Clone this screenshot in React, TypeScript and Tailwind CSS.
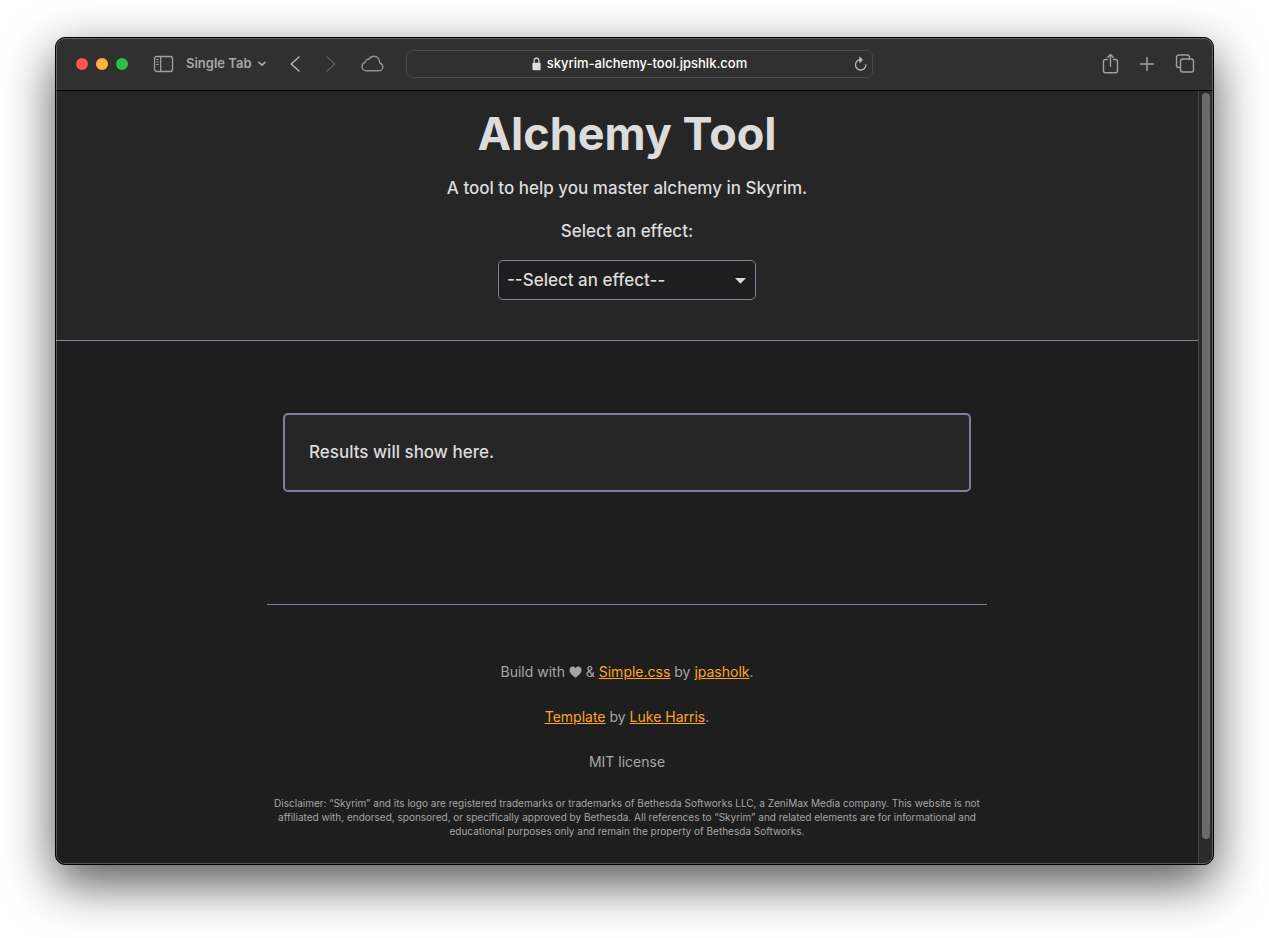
import React from "react";

function Toolbar() {
  return (
    <header className="flex h-[52px] items-center bg-[#303030] pr-[17px] pl-5 text-[#a8a8a8]">
      <div className="flex items-center gap-2">
        <span className="size-3 rounded-full bg-[#fe5550]" />
        <span className="size-3 rounded-full bg-[#ffb339]" />
        <span className="size-3 rounded-full bg-[#2dc143]" />
      </div>
      <button type="button" aria-label="Sidebar" className="ml-[25px]">
        <svg width="21" height="18" viewBox="0 0 21 18" fill="none" stroke="#a0a0a0" strokeWidth="1.3">
          <rect x="1.5" y="1.5" width="18" height="15" rx="2" />
          <path d="M7.700 1.500v15" />
          <path d="M3.200 4.500h2.400M3.200 7h2.400M3.200 9.500h2.400" strokeWidth="1" />
        </svg>
      </button>
      <button type="button" className="ml-3 flex items-center gap-[6px] text-[13px] font-semibold">
        Single Tab
        <svg width="8" height="6" viewBox="0 0 8 6" fill="none" stroke="currentColor" strokeWidth="1.7" strokeLinecap="round" strokeLinejoin="round">
          <path d="M1 1.3 4 4.2 7 1.3" />
        </svg>
      </button>
      <button type="button" aria-label="Back" className="ml-6">
        <svg width="10" height="16" viewBox="0 0 10 16" fill="none" stroke="#b4b4b4" strokeWidth="1.5" strokeLinecap="round" strokeLinejoin="round">
          <path d="M9 1 1.200 8 9 15" />
        </svg>
      </button>
      <button type="button" aria-label="Forward" className="ml-[26px]" disabled>
        <svg width="10" height="16" viewBox="0 0 10 16" fill="none" stroke="#5c5c5c" strokeWidth="1.5" strokeLinecap="round" strokeLinejoin="round">
          <path d="M1 1 8.800 8 1 15" />
        </svg>
      </button>
      <button type="button" aria-label="iCloud tabs" className="ml-[25px]">
        <svg width="23" height="18" viewBox="0 0 23 18" fill="none" stroke="#909090" strokeWidth="1.4" strokeLinejoin="round">
          <path d="M5.200 15.800h12.400c2.400 0 4.200-1.700 4.200-3.900 0-2-1.300-3.400-3-3.900C18.800 4 16.300 1.200 13 1.200c-2.400 0-4.200 1.200-5.200 3.100C5.900 3.900 4.200 5.300 4.200 7.400 2.300 8 1 9.500 1 11.600c0 2.400 1.800 4.200 4.200 4.200Z" />
        </svg>
      </button>
      <div className="ml-[22px] flex h-7 w-[467px] min-w-0 items-center rounded-[7px] border border-[#494949] px-1">
        <div className="flex flex-1 items-center justify-center gap-[6px] pl-4 text-[13px] font-medium text-white">
          <svg width="9" height="14" viewBox="0 0 9 14" aria-hidden="true">
            <rect x="0.400" y="5.800" width="8.200" height="7.400" rx="1.200" fill="#dedede" />
            <path d="M2.100 6.500V4c0-1.800.9-2.900 2.400-2.900S6.900 2.200 6.900 4v2.500" fill="none" stroke="#dedede" strokeWidth="1.200" />
          </svg>
          skyrim-alchemy-tool.jpshlk.com
        </div>
        <button type="button" aria-label="Reload">
          <svg width="15" height="16" viewBox="0 0 15 16" fill="none" stroke="#b8b8b8" strokeWidth="1.300" strokeLinecap="round">
            <path d="M7.800 3.600a5.200 5.200 0 1 0 5.100 5.200" />
            <path d="M6.800 1.200 9.600 3.800 7 6.500Z" fill="#b8b8b8" strokeWidth="0.800" strokeLinejoin="round" />
          </svg>
        </button>
      </div>
      <div className="ml-auto flex items-center gap-[19px] text-[#a0a0a0]">
        <button type="button" aria-label="Share">
          <svg width="18" height="22" viewBox="0 0 18 22" fill="none" stroke="currentColor" strokeWidth="1.400" strokeLinecap="round" strokeLinejoin="round">
            <path d="M5.500 6.500H3.500a2 2 0 0 0-2 2v9.300a2 2 0 0 0 2 2h10a2 2 0 0 0 2-2V8.500a2 2 0 0 0-2-2H11.500M8.500 13.200V1.500M5.800 4.200 8.500 1.500l2.700 2.700" />
          </svg>
        </button>
        <button type="button" aria-label="New tab">
          <svg width="16" height="16" viewBox="0 0 16 16" fill="none" stroke="currentColor" strokeWidth="1.500" strokeLinecap="round">
            <path d="M8 1.500v13M1.500 8h13" />
          </svg>
        </button>
        <button type="button" aria-label="Tab overview">
          <svg width="22" height="22" viewBox="0 0 22 22" fill="none" stroke="currentColor" strokeWidth="1.400">
            <rect x="6.500" y="6" width="13" height="13" rx="2.200" />
            <path d="M6.500 14.500H4.700a2.200 2.200 0 0 1-2.200-2.200V4.200A2.200 2.200 0 0 1 4.700 2h8.600a2.200 2.200 0 0 1 2.200 2.200V6" />
          </svg>
        </button>
      </div>
    </header>
  );
}

function SiteHeader() {
  return (
    <div className="flex flex-col items-center border-b border-[#7e8199] bg-[#262626] pt-4 pb-10 text-center">
      <h1 className="text-[45px] leading-[53px] font-bold">Alchemy Tool</h1>
      <p className="mt-[15px] leading-[27px]">A tool to help you master alchemy in Skyrim.</p>
      <label htmlFor="effect" className="mt-4 leading-[27px]">
        Select an effect:
      </label>
      <div className="relative mt-[15px]">
        <select
          id="effect"
          className="block h-10 w-[258px] appearance-none rounded-[5px] border border-[#7e8199] bg-[#1e1e1e] px-2 pt-[2px]"
        >
          <option>--Select an effect--</option>
        </select>
        <svg className="pointer-events-none absolute top-[18px] right-[10px]" width="11" height="6" viewBox="0 0 11 6" fill="#dcdcdc">
          <path d="M0 0h11L5.500 5.800Z" />
        </svg>
      </div>
    </div>
  );
}

function TextLink({ children }: { children: React.ReactNode }) {
  return (
    <a href="#" className="text-[#ffa526] underline">
      {children}
    </a>
  );
}

function SiteFooter() {
  return (
    <footer className="mx-auto mt-28 w-full max-w-[720px] border-t border-[#7e8199] px-1 pt-14 pb-[26px] text-center text-[14px] leading-[22px] font-normal text-[#a6a6a6]">
      <p>
        Build with{" "}
        <svg className="inline-block align-[-1px]" width="13" height="12" viewBox="0 0 13 12" fill="currentColor" role="img" aria-label="love">
          <path d="M6.500 11.700C3.400 9.300.5 7 .5 3.900.5 1.900 1.900.5 3.600.5c1.200 0 2.300.6 2.900 1.700C7.100 1.100 8.200.5 9.400.5c1.700 0 3.100 1.400 3.100 3.400 0 3.100-2.900 5.400-6 7.800Z" />
        </svg>{" "}
        & <TextLink>Simple.css</TextLink> by <TextLink>jpasholk</TextLink>.
      </p>
      <p className="mt-[23px]">
        <TextLink>Template</TextLink> by <TextLink>Luke Harris</TextLink>.
      </p>
      <p className="mt-[23px]">MIT license</p>
      <p className="mt-[23px] text-[10px] leading-[14px]">
        Disclaimer: “Skyrim” and its logo are registered trademarks or trademarks of Bethesda Softworks LLC, a ZeniMax
        Media company. This website is not affiliated with, endorsed, sponsored, or specifically approved by Bethesda.
        All references to “Skyrim” and related elements are for informational and educational purposes only and remain
        the property of Bethesda Softworks.
      </p>
    </footer>
  );
}

export default function App() {
  return (
    <div className="min-h-screen bg-white px-[55px] pt-[37px] pb-[73px] font-['Inter',sans-serif]">
      <div className="relative overflow-hidden rounded-[10px] border border-black bg-[#1e1e1e] shadow-[0_18px_50px_rgba(0,0,0,0.68)]">
        <Toolbar />
        <div className="flex border-t border-black">
          <div className="min-w-0 flex-1 text-[17px] font-medium text-[#dcdcdc]">
            <SiteHeader />
            <main className="mx-auto mt-[72px] w-full max-w-[720px] px-4">
              <div className="rounded-[5px] border-2 border-[#7e8199] bg-[#262626] p-6 leading-[27px]">
                <p>Results will show here.</p>
              </div>
            </main>
            <SiteFooter />
          </div>
          <div className="flex w-[15px] flex-col border-l border-[#444444] bg-[#2b2b2b] pt-[2px] pb-[25px] pl-[3px]">
            <div className="w-2 flex-1 rounded-full bg-[#6b6b6b]" />
          </div>
        </div>
        <div className="pointer-events-none absolute inset-0 rounded-[9px] border border-white/25" />
      </div>
    </div>
  );
}
